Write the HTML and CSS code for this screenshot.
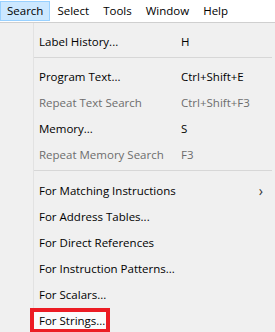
FILE: index.html
```html
<!DOCTYPE html>
<html>
<head>
<meta charset="utf-8">
<link rel="stylesheet" href="styles.css">
</head>
<body>
<div class="menubar">
  <span class="mb-item active">Search</span>
  <span class="mb-item">Select</span>
  <span class="mb-item">Tools</span>
  <span class="mb-item">Window</span>
  <span class="mb-item">Help</span>
</div>
<div class="menu">
  <div class="item"><span class="label">Label History...</span><span class="key">H</span></div>
  <div class="sep"></div>
  <div class="item"><span class="label">Program Text...</span><span class="key">Ctrl+Shift+E</span></div>
  <div class="item disabled"><span class="label">Repeat Text Search</span><span class="key">Ctrl+Shift+F3</span></div>
  <div class="item"><span class="label">Memory...</span><span class="key">S</span></div>
  <div class="item disabled"><span class="label">Repeat Memory Search</span><span class="key">F3</span></div>
  <div class="sep sep2"></div>
  <div class="item"><span class="label">For Matching Instructions</span><span class="arrow">&#x203A;</span></div>
  <div class="item"><span class="label">For Address Tables...</span></div>
  <div class="item"><span class="label">For Direct References</span></div>
  <div class="item"><span class="label">For Instruction Patterns...</span></div>
  <div class="item"><span class="label">For Scalars...</span></div>
  <div class="item marked"><span class="mark"></span><span class="label">For Strings...</span></div>
</div>
</body>
</html>
```
FILE: styles.css
```css
* { box-sizing: border-box; }
html, body { margin: 0; padding: 0; }
body {
  width: 275px;
  height: 332px;
  overflow: hidden;
  background: #f0f0f0;
  font-family: "Open Sans", "Noto Sans", sans-serif;
  font-size: 11.5px;
  color: #000;
}
.menubar {
  height: 23px;
  background: #fff;
  border-bottom: 1px solid #cfcfcf;
  display: flex;
  align-items: flex-end;
  padding-bottom: 1px;
}
.mb-item {
  height: 20px;
  line-height: 18px;
  padding: 0 6px;
  border: 1px solid transparent;
  font-size: 11.5px;
}
.mb-item.active {
  background: #cce8ff;
  border-color: #99d1ff;
}
.menu {
  padding-top: 5px;
  height: 309px;
  background: linear-gradient(to right, #f0f0f0 33px, #e2e2e2 33px, #e2e2e2 34px, #f0f0f0 34px);
}
.item {
  position: relative;
  display: flex;
  align-items: center;
  height: 26px;
  padding-left: 39px;
  padding-right: 12px;
}
.label {
  position: relative;
  width: 142px;
  white-space: nowrap;
}
.key { white-space: nowrap; }
.disabled { color: #6d6d6d; }
.arrow {
  margin-left: auto;
  font-size: 14px;
  color: #333;
}
.sep {
  height: 9px;
  margin-left: 34px;
  margin-right: 3px;
  border-top: 3px solid transparent;
  background: linear-gradient(#d7d7d7, #d7d7d7) top / 100% 1px no-repeat;
}
.sep2 { height: 10px; }
.mark {
  position: absolute;
  left: 30px;
  top: 1px;
  width: 80px;
  height: 25px;
  border: 4px solid #ec1c24;
  background: #fbfbfb;
}
```
